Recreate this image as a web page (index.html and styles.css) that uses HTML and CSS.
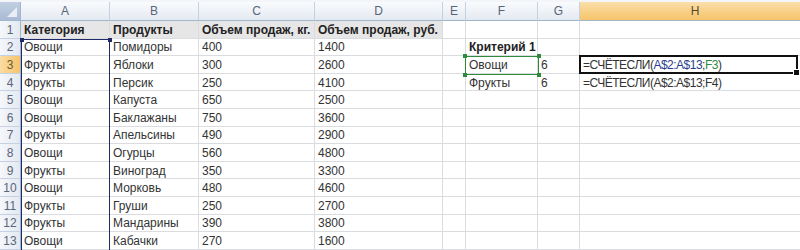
FILE: index.html
```html
<!DOCTYPE html>
<html lang="ru">
<head>
<meta charset="utf-8">
<title>Excel — СЧЁТЕСЛИ</title>
<link rel="stylesheet" href="styles.css">
</head>
<body>
<div class="page">
  <div class="sheet">
    <div class="corner"><span class="tri"></span></div>
    <div class="ch">A</div>
    <div class="ch">B</div>
    <div class="ch">C</div>
    <div class="ch">D</div>
    <div class="ch">E</div>
    <div class="ch">F</div>
    <div class="ch">G</div>
    <div class="ch ch-active">H</div>

    <div class="rh">1</div>
    <div class="c head">Категория</div><div class="c head">Продукты</div><div class="c head">Объем продаж, кг.</div><div class="c head">Объем продаж, руб.</div><div class="c"></div><div class="c"></div><div class="c"></div><div class="c"></div>

    <div class="rh">2</div>
    <div class="c">Овощи</div><div class="c">Помидоры</div><div class="c">400</div><div class="c">1400</div><div class="c"></div><div class="c b">Критерий 1</div><div class="c"></div><div class="c"></div>

    <div class="rh rh-active">3</div>
    <div class="c">Фрукты</div><div class="c">Яблоки</div><div class="c">300</div><div class="c">2600</div><div class="c"></div><div class="c">Овощи</div><div class="c">6</div><div class="c formula">=СЧЁТЕСЛИ(<span class="ref-a">A$2:A$13</span>;<span class="ref-f">F3</span>)</div>

    <div class="rh">4</div>
    <div class="c">Фрукты</div><div class="c">Персик</div><div class="c">250</div><div class="c">4100</div><div class="c"></div><div class="c">Фрукты</div><div class="c">6</div><div class="c formula">=СЧЁТЕСЛИ(A$2:A$13;F4)</div>

    <div class="rh">5</div>
    <div class="c">Овощи</div><div class="c">Капуста</div><div class="c">650</div><div class="c">2500</div><div class="c"></div><div class="c"></div><div class="c"></div><div class="c"></div>

    <div class="rh">6</div>
    <div class="c">Овощи</div><div class="c">Баклажаны</div><div class="c">750</div><div class="c">3600</div><div class="c"></div><div class="c"></div><div class="c"></div><div class="c"></div>

    <div class="rh">7</div>
    <div class="c">Фрукты</div><div class="c">Апельсины</div><div class="c">490</div><div class="c">2900</div><div class="c"></div><div class="c"></div><div class="c"></div><div class="c"></div>

    <div class="rh">8</div>
    <div class="c">Овощи</div><div class="c">Огурцы</div><div class="c">560</div><div class="c">4800</div><div class="c"></div><div class="c"></div><div class="c"></div><div class="c"></div>

    <div class="rh">9</div>
    <div class="c">Фрукты</div><div class="c">Виноград</div><div class="c">350</div><div class="c">3300</div><div class="c"></div><div class="c"></div><div class="c"></div><div class="c"></div>

    <div class="rh">10</div>
    <div class="c">Овощи</div><div class="c">Морковь</div><div class="c">480</div><div class="c">4600</div><div class="c"></div><div class="c"></div><div class="c"></div><div class="c"></div>

    <div class="rh">11</div>
    <div class="c">Фрукты</div><div class="c">Груши</div><div class="c">250</div><div class="c">2700</div><div class="c"></div><div class="c"></div><div class="c"></div><div class="c"></div>

    <div class="rh">12</div>
    <div class="c">Фрукты</div><div class="c">Мандарины</div><div class="c">390</div><div class="c">3800</div><div class="c"></div><div class="c"></div><div class="c"></div><div class="c"></div>

    <div class="rh">13</div>
    <div class="c">Овощи</div><div class="c">Кабачки</div><div class="c">270</div><div class="c">1600</div><div class="c"></div><div class="c"></div><div class="c"></div><div class="c"></div>

    <div class="sel-range">
      <span class="sq sq-tl"></span><span class="sq sq-tr"></span>
    </div>
    <div class="sel-crit">
      <span class="gq gq-tl"></span><span class="gq gq-tr"></span><span class="gq gq-bl"></span><span class="gq gq-br"></span>
    </div>
    <div class="active-cell"><span class="handle"></span></div>
  </div>
</div>
</body>
</html>
```
FILE: styles.css
```css
html, body {
  margin: 0;
  padding: 0;
  background: #ffffff;
}

.page {
  width: 800px;
  height: 250px;
  overflow: hidden;
  padding-top: 2px;
  box-sizing: border-box;
  background: #f3f5f8;
}

.sheet {
  position: relative;
  display: grid;
  grid-template-columns: 21px 89px 89px 116px 128px 23px 72px 42px 230px;
  grid-template-rows: 19px repeat(13, 17.6px);
  font-family: "Liberation Sans", Arial, sans-serif;
  font-size: 12px;
  color: #333333;
  background: #ffffff;
}

.corner {
  position: relative;
  background: linear-gradient(#c3d0e3, #a9bad3);
  border-right: 1px solid #9eb6ce;
  border-bottom: 1px solid #9eb6ce;
}

.tri {
  position: absolute;
  right: 3px;
  bottom: 3px;
  width: 0;
  height: 0;
  border-left: 10px solid transparent;
  border-bottom: 10px solid #e9eef6;
}

.ch {
  display: flex;
  align-items: center;
  justify-content: center;
  background: linear-gradient(#f9fbfd, #e4e9f1);
  border-right: 1px solid #c5d1e0;
  border-bottom: 1px solid #9eb6ce;
  color: #5a6578;
  font-size: 12px;
}

.ch-active {
  background: linear-gradient(#fadea9, #f6c46a);
  border-right: none;
  color: #5a4a2a;
}

.rh {
  display: flex;
  align-items: center;
  justify-content: center;
  padding-top: 1px;
  background: linear-gradient(90deg, #f4f7fb, #e4e9f1);
  border-right: 1px solid #9eb6ce;
  border-bottom: 1px solid #c5d1e0;
  color: #5a6578;
  font-size: 12px;
}

.rh-active {
  background: linear-gradient(90deg, #fbdca3, #f6c46a);
  color: #6a5a3a;
}

.c {
  display: flex;
  align-items: center;
  padding-left: 3px;
  padding-top: 1px;
  white-space: nowrap;
  border-right: 1px solid #dadcdf;
  border-bottom: 1px solid #dadcdf;
  overflow: visible;
  min-width: 0;
}

.formula {
  letter-spacing: -0.5px;
}

.head {
  font-weight: bold;
  background: #e6e6e6;
  color: #222222;
}

.b {
  font-weight: bold;
  color: #222222;
}

.ref-a {
  color: #2a3f8f;
}

.ref-f {
  color: #2e8b3e;
}

.sel-range {
  position: absolute;
  left: 21px;
  top: 36.6px;
  width: 87px;
  height: 230px;
  border: 1px solid #1f2a66;
}

.sq {
  position: absolute;
  width: 4px;
  height: 4px;
  background: #1f2a66;
}

.sq-tl { left: -2px; top: -2px; }
.sq-tr { right: -3px; top: -2px; }

.sel-crit {
  position: absolute;
  left: 465px;
  top: 54px;
  width: 72px;
  height: 17px;
  border: 1px solid #2f8a3c;
}

.gq {
  position: absolute;
  width: 4px;
  height: 4px;
  background: #2f8a3c;
}

.gq-tl { left: -3px; top: -3px; }
.gq-tr { right: -3px; top: -3px; }
.gq-bl { left: -3px; bottom: -3px; }
.gq-br { right: -3px; bottom: -3px; }

.active-cell {
  position: absolute;
  left: 579px;
  top: 53px;
  width: 215px;
  height: 15px;
  border: 2px solid #111111;
}

.handle {
  position: absolute;
  right: -4px;
  bottom: -4px;
  width: 5px;
  height: 5px;
  background: #111111;
  border: 1px solid #ffffff;
}
```
